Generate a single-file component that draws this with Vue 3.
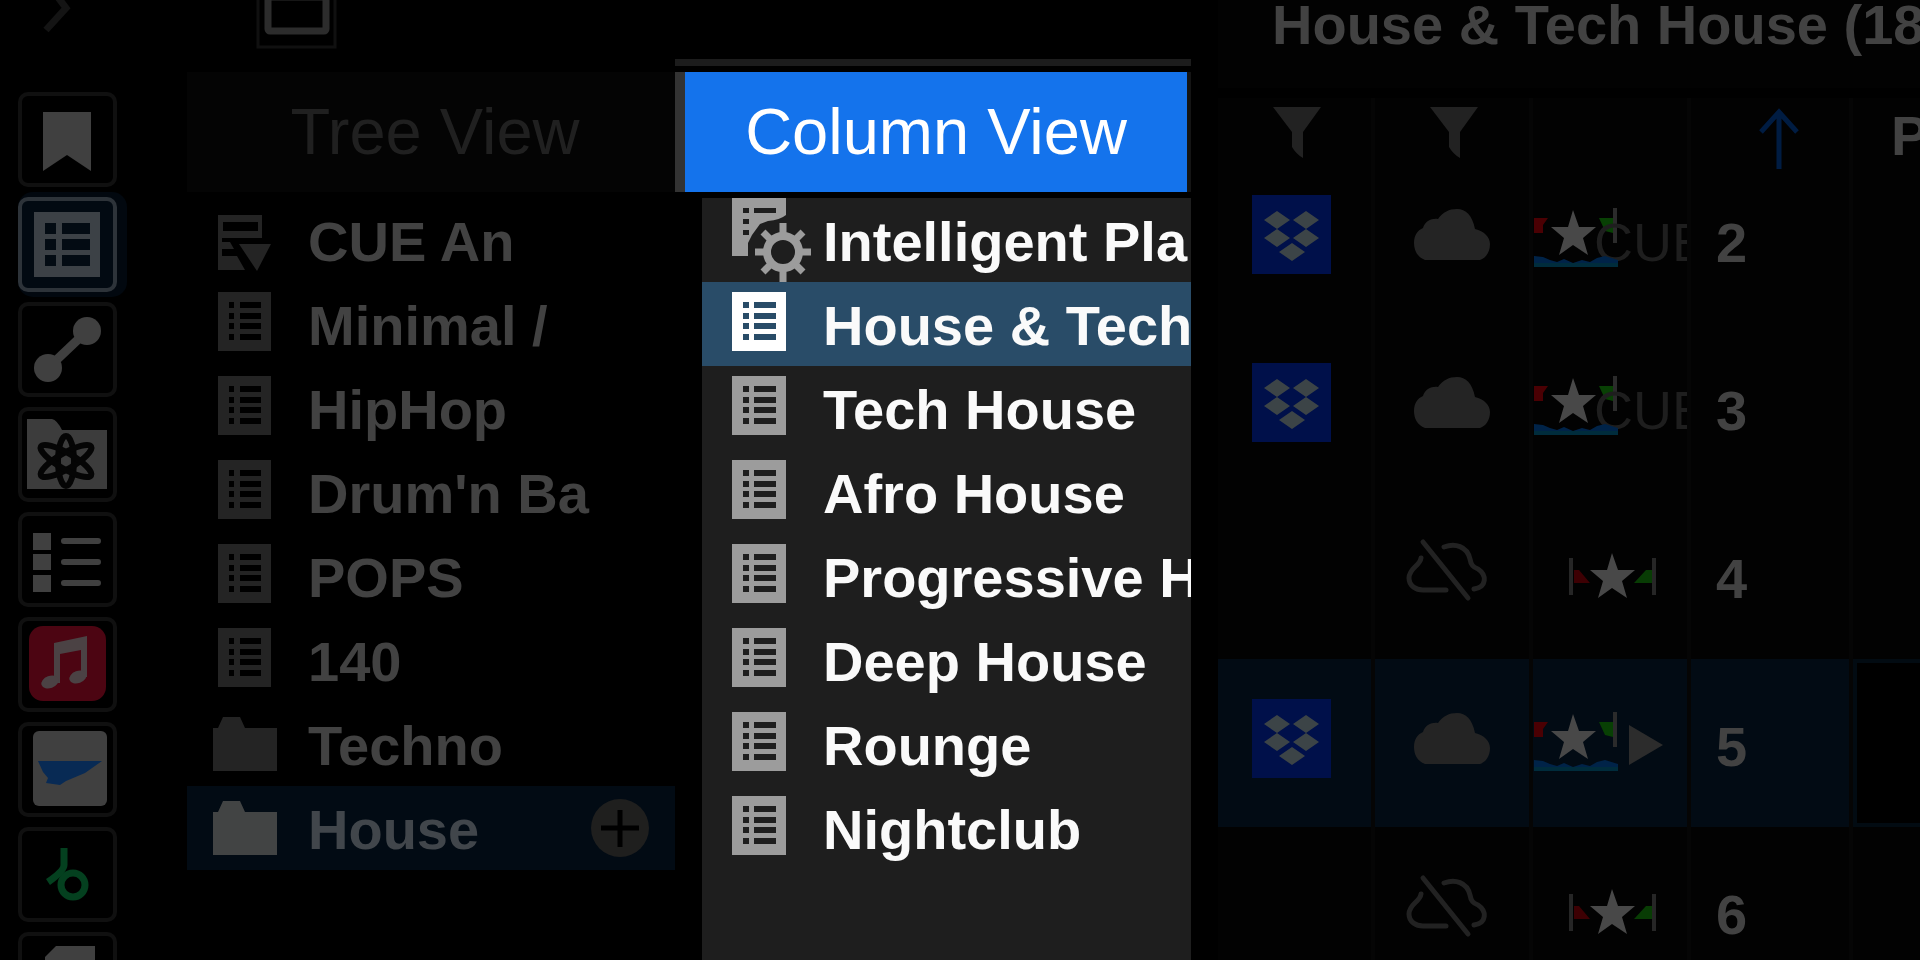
<template>
  <div class="app">
    <header class="topbar">
      <svg class="chevron" viewBox="0 0 40 40" aria-hidden="true">
        <path d="M6 30 L26 8 L14 -8" fill="none" stroke="#141414" stroke-width="7" />
      </svg>
      <button class="layout-button" type="button" aria-label="Layout">
        <svg viewBox="0 0 82 50">
          <path d="M2 -4 V47 H79 V-4" fill="none" stroke="#101010" stroke-width="3" />
          <rect x="12" y="-3" width="58" height="34" rx="2" fill="none" stroke="#2c2c2c" stroke-width="7" />
        </svg>
      </button>
    </header>

    <nav class="sidebar" aria-label="Sources">
      <button
        v-for="item in sources"
        :key="item"
        type="button"
        class="source"
        :class="{ active: item === activeSource }"
        :aria-label="item"
        @click="activeSource = item"
      >
        <svg viewBox="4 4 91 87">
          <path v-if="item === 'Bookmarks'" d="M25 20 H73 V79 L49 63 L25 79 Z" fill="#404040" />
          <g v-else-if="item === 'Playlists'">
            <rect x="16" y="15" width="66" height="65" fill="#3c4146" />
            <path d="M27 26h11v11h-11z M44 26h28v11h-28z M27 42h11v11h-11z M44 42h28v11h-28z M27 58h11v11h-11z M44 58h28v11h-28z" fill="#030b13" />
          </g>
          <g v-else-if="item === 'Matching'" fill="#404040">
            <path d="M30 66 L69 29" stroke="#404040" stroke-width="9" />
            <circle cx="30" cy="66" r="14" />
            <circle cx="69" cy="29" r="14" />
          </g>
          <g v-else-if="item === 'Related Tracks'">
            <path d="M9 12 H34 Q39 13 44 23 H89 V82 H9 Z" fill="#3c3c3c" />
            <g fill="none" stroke="#050505" stroke-width="6">
              <ellipse cx="48" cy="54" rx="8" ry="25" />
              <ellipse cx="48" cy="54" rx="8" ry="29" transform="rotate(60 48 54)" />
              <ellipse cx="48" cy="54" rx="8" ry="29" transform="rotate(-60 48 54)" />
            </g>
            <circle cx="48" cy="54" r="4" fill="#3c3c3c" />
          </g>
          <g v-else-if="item === 'Categories'" fill="#404040">
            <path d="M15 21h18v17h-18z M15 42h18v16h-18z M15 63h18v17h-18z" />
            <path d="M46 29 H80 M46 50 H80 M46 71 H80" stroke="#404040" stroke-width="6" stroke-linecap="round" />
          </g>
          <g v-else-if="item === 'Music'">
            <rect x="11" y="9" width="77" height="75" rx="14" fill="#4c0512" />
            <path d="M36 26 L69 19 V60 H63 V33 L42 37 V66 H36 Z" fill="#4b4244" />
            <ellipse cx="32" cy="65" rx="9" ry="6" fill="#4b4244" transform="rotate(-20 32 65)" />
            <ellipse cx="60" cy="60" rx="9" ry="6" fill="#4b4244" transform="rotate(-20 60 60)" />
          </g>
          <g v-else-if="item === 'Streaming'">
            <rect x="15" y="9" width="74" height="75" rx="6" fill="#404040" />
            <path d="M20 39 H84 L67 51 L48 59 L42 63 L28 61 L30 56 L25 50 Z" fill="#082a54" />
          </g>
          <g v-else-if="item === 'Beats'" fill="none" stroke="#04401f" stroke-width="7">
            <circle cx="55" cy="58" r="12" />
            <path d="M46 21 V38 Q46 44 30 55" />
          </g>
          <path v-else d="M27 25 L38 14 H77 V95 H27 Z" fill="#404040" />
        </svg>
      </button>
    </nav>

    <section class="tree">
      <button class="tab" type="button">Tree View</button>
      <ul class="list">
        <li v-for="row in tree" :key="row.name">
          <button class="row" :class="{ selected: row.name === 'House' }" type="button">
            <svg class="tree-icon" viewBox="0 0 94 84" aria-hidden="true">
              <path v-if="row.icon === 'folder'" d="M0 26 H5 L10 15 H27 L32 26 H64 V69 H0 Z" />
              <path v-else-if="row.icon === 'list'" fill-rule="evenodd" :d="treeList" />
              <path v-else fill-rule="evenodd" d="M5 17H49V40H9V44H17L21 51H9V58H24L32 72H5Z M10 24V33H45V24Z M26 46H58L44 73Z" />
            </svg>
            <span class="name">{{ row.name }}</span>
            <svg v-if="row.name === 'House'" class="add" viewBox="0 0 58 58" aria-hidden="true">
              <circle cx="29" cy="29" r="29" fill="#1f1f1e" />
              <path d="M10 29 H48 M29 11 V48" stroke="#000" stroke-width="5" />
            </svg>
          </button>
        </li>
      </ul>
    </section>

    <div class="rule"></div>
    <section class="column">
      <button class="tab tab-active" type="button">Column View</button>
      <ul class="list column-list">
        <li v-for="row in playlists" :key="row">
          <button class="row" :class="{ selected: row === current }" type="button" @click="current = row">
            <svg class="column-icon" viewBox="0 0 91 84" aria-hidden="true">
              <g v-if="row === 'Intelligent Pla'">
                <path fill-rule="evenodd" d="M0 0H54V17Q48 22 36 23L28 26L20 37L16 45V58H0Z M11 10V15H17V10Z M22 10V15H44V10Z M11 21V26H17V21Z M11 32V37H17V32Z" />
                <circle cx="51" cy="54" r="16" fill="none" stroke="#9c9c9c" stroke-width="8" />
                <path d="M51 25V37M51 71V84M23 54H34M68 54H79M31 34L39 42M63 66L71 74M71 34L63 42M39 66L31 74" stroke="#9c9c9c" stroke-width="7" />
              </g>
              <path v-else fill-rule="evenodd" d="M0 10H54V69H0Z M11 20V26H17V20Z M22 20V26H44V20Z M11 31V37H17V31Z M22 31V37H44V31Z M11 41V47H17V41Z M22 41V47H44V41Z M11 52V58H17V52Z M22 52V58H44V52Z" />
            </svg>
            <span class="name">{{ row }}</span>
          </button>
        </li>
      </ul>
    </section>

    <main class="tracks">
      <h1>House &amp; Tech House (18</h1>
      <table>
        <colgroup>
          <col class="c-source" />
          <col class="c-mid" />
          <col class="c-mid" />
          <col class="c-number" />
          <col />
        </colgroup>
        <thead>
          <tr>
            <th v-for="n in 2" :key="n">
              <svg class="head-icon" viewBox="0 0 154 79" aria-label="Filter">
                <path d="M55 9 H103 L85 34 V60 Q78 56 74 49 V34 Z" fill="#222" />
              </svg>
            </th>
            <th></th>
            <th>
              <svg class="head-icon" viewBox="0 0 154 79" aria-label="Ascending">
                <path d="M88 71 V14 M70 34 L88 14 L106 34" fill="none" stroke="#001c42" stroke-width="5" />
              </svg>
            </th>
            <th class="preview">P</th>
          </tr>
        </thead>
        <tbody>
          <tr v-for="track in tracks" :key="track.no" :class="{ playing: track.no === 5 }">
            <td>
              <svg v-if="track.cloud" class="cell-icon" viewBox="0 0 154 146" aria-label="Dropbox">
                <rect x="34" y="18" width="79" height="79" fill="#00104a" />
                <path d="M59 34l13 9l-13 9l-13-9z M88 34l13 9l-13 9l-13-9z M59 52l13 9l-13 9l-13-9z M88 52l13 9l-13 9l-13-9z M74 66l13 9l-13 9l-13-9z" fill="#3c4447" />
              </svg>
            </td>
            <td>
              <svg class="cell-icon" viewBox="0 0 154 146" aria-hidden="true">
                <path v-if="track.cloud" d="M50 83 C42 80 39 73 39 66 C39 58 43 53 48 51 C50 44 57 41 63 42 C68 35 74 32 82 32 C91 32 97 38 100 52 C109 54 115 60 115 67 C115 75 111 81 105 83 Z" fill="#242424" />
                <g v-else fill="none" stroke="#222" stroke-width="5" stroke-linecap="round">
                  <path d="M48 29 L93 85" />
                  <path d="M46 45 C45 53 34 55 34 65 C34 73 41 77 48 77 H71" />
                  <path d="M69 34 C80 30 92 33 95 46 C96 52 98 54 103 56 C112 62 112 74 99 76" />
                </g>
              </svg>
            </td>
            <td>
              <svg v-if="track.cloud" class="cell-icon" viewBox="0 0 154 146">
                <path d="M1 41H15L10 48V56H1Z" fill="#4a0003" />
                <path d="M66 41H80V56L72 54Z" fill="#084004" />
                <path d="M82 31V66" stroke="#2b2b2b" stroke-width="4" />
                <path v-if="track.no === 5" d="M96 44L130 64L96 84Z" fill="#2c2c2c" />
                <text v-else x="61" y="84" class="cue">CUE</text>
                <path d="M1 79L10 80L17 83L24 85L31 82L40 86L49 83L57 85L64 81L72 79L85 83V90H1Z" fill="#002348" />
                <path d="M1 86H85V90H1Z" fill="#002c3c" />
                <path :d="star" fill="#484848" />
              </svg>
              <svg v-else class="cell-icon" viewBox="0 0 154 146">
                <path d="M38 45V82M121 45V82" stroke="#262626" stroke-width="4" />
                <path d="M41 57H46L57 70H41Z" fill="#3d0003" />
                <path d="M101 70L113 57H119V70Z" fill="#083c04" />
                <path :d="star" fill="#484848" transform="translate(39 7)" />
              </svg>
            </td>
            <td class="number">{{ track.no }}</td>
            <td class="wave"></td>
          </tr>
        </tbody>
      </table>
    </main>
  </div>
</template>

<script setup>
import { ref } from 'vue';

const sources = [
  'Bookmarks',
  'Playlists',
  'Matching',
  'Related Tracks',
  'Categories',
  'Music',
  'Streaming',
  'Beats',
  'Devices',
];
const activeSource = ref('Playlists');

const tree = [
  { name: 'CUE An', icon: 'cue' },
  { name: 'Minimal /', icon: 'list' },
  { name: 'HipHop', icon: 'list' },
  { name: "Drum'n Ba", icon: 'list' },
  { name: 'POPS', icon: 'list' },
  { name: '140', icon: 'list' },
  { name: 'Techno', icon: 'folder' },
  { name: 'House', icon: 'folder' },
];

const playlists = [
  'Intelligent Pla',
  'House & Tech House',
  'Tech House',
  'Afro House',
  'Progressive House',
  'Deep House',
  'Rounge',
  'Nightclub',
];
const current = ref('House & Tech House');

const tracks = [
  { no: 2, cloud: true },
  { no: 3, cloud: true },
  { no: 4, cloud: false },
  { no: 5, cloud: true },
  { no: 6, cloud: false },
];

const treeList =
  'M5 10H58V69H5Z M16 20V26H21V20Z M27 20V26H48V20Z M16 31V37H21V31Z M27 31V37H48V31Z M16 41V47H21V41Z M27 41V47H48V41Z M16 52V58H21V52Z M27 52V58H48V52Z';
const star = 'M40 33L46 50L63 50L50 61L55 78L40 68L26 78L31 61L18 50L35 50Z';
</script>

<style>
body {
  margin: 0;
  background: #000;
}
</style>

<style scoped>
.app {
  display: grid;
  grid-template-columns: 187px 488fr 516fr 729fr;
  grid-template-rows: 72px 1fr;
  height: 100vh;
  overflow: hidden;
  background: #000;
  color: #424242;
  font-family: "Liberation Sans", Arial, sans-serif;
}

svg {
  display: block;
  flex: none;
}

button {
  padding: 0;
  border: none;
  background: none;
  color: inherit;
  font: inherit;
  cursor: pointer;
}

.topbar {
  grid-column: 1 / 3;
  display: flex;
  align-items: flex-start;
  gap: 176px;
  padding-left: 40px;
}

.chevron {
  width: 40px;
  height: 40px;
}

.layout-button svg {
  width: 82px;
  height: 50px;
}

.sidebar {
  grid-area: 2 / 1;
  display: flex;
  flex-direction: column;
  gap: 10px;
  padding: 20px 0 0 18px;
  min-height: 0;
}

.source {
  box-sizing: border-box;
  flex: none;
  width: 99px;
  height: 95px;
  border: 4px solid #101010;
  border-radius: 10px;
}

.source.active {
  border-color: #2d3339;
  background: #020a12;
  box-shadow: 5px 0 0 5px #02080f;
}

.tree {
  grid-area: 2 / 2;
  min-width: 0;
}

.tab {
  display: block;
  width: 100%;
  height: 120px;
  margin-bottom: 6px;
  background: #040404;
  color: #202020;
  font-size: 65px;
  line-height: 76px;
  text-align: center;
}

.tree .tab {
  padding-left: 8px;
}

.list {
  margin: 0;
  padding: 0;
  list-style: none;
}

.row {
  display: flex;
  align-items: center;
  width: 100%;
  height: 84px;
  overflow: hidden;
  font-size: 56px;
  font-weight: bold;
  line-height: 84px;
  text-align: left;
  white-space: nowrap;
}

.tree .row {
  padding-left: 25px;
}

.tree .selected {
  background: #020b14;
  color: #41464b;
}

.tree-icon {
  width: 96px;
  height: 84px;
  fill: #242424;
}

.selected .tree-icon {
  fill: #424444;
}

.name {
  flex: 1;
  min-width: 0;
  padding-top: 3px;
}

.add {
  width: 58px;
  height: 58px;
  margin-right: 26px;
}

.rule {
  grid-area: 1 / 3;
  height: 7px;
  margin-top: 59px;
  background: #1c1c1c;
}

.column {
  grid-area: 2 / 3;
  display: flex;
  flex-direction: column;
  min-width: 0;
}

.tab-active {
  flex: none;
  border-right: 4px solid #141414;
  border-left: 10px solid #333;
  background: #1473ec;
  color: #fff;
}

.column-list {
  flex: 1;
  margin-left: 27px;
  background: #1e1e1e;
  color: #fafafa;
}

.column-list .row {
  padding-left: 30px;
}

.column-list .selected {
  background: #294c68;
}

.column-icon {
  width: 91px;
  height: 84px;
  fill: #9c9c9c;
}

.selected .column-icon {
  fill: #fff;
}

.tracks {
  grid-area: 1 / 4 / 3 / 5;
  min-width: 0;
  margin-left: 27px;
  overflow: hidden;
  background: #020202;
}

h1 {
  height: 88px;
  margin: 0;
  padding-left: 54px;
  border-bottom: 10px solid #000;
  font-size: 56px;
  line-height: 50px;
  white-space: nowrap;
}

table {
  width: 100%;
  border-collapse: separate;
  border-spacing: 0;
  table-layout: fixed;
}

.c-source {
  width: 157px;
}

.c-mid {
  width: 158px;
}

.c-number {
  width: 162px;
}

th,
td {
  box-sizing: border-box;
  overflow: hidden;
  padding: 0;
  border-right: 4px solid #050505;
  vertical-align: bottom;
}

th:last-child,
td:last-child {
  border-right: none;
}

th {
  height: 79px;
  vertical-align: top;
}

td {
  height: 168px;
}

tbody tr:first-child td {
  height: 146px;
}

.head-icon {
  width: 154px;
  height: 79px;
}

.cell-icon {
  width: 154px;
  height: 146px;
}

.cue {
  fill: #1e1e1e;
  font-size: 54px;
}

.preview {
  padding-left: 38px;
  font-size: 56px;
  line-height: 76px;
  text-align: left;
}

.number {
  padding: 0 0 38px 25px;
  font-size: 56px;
  font-weight: bold;
  line-height: 84px;
}

.playing td {
  background: #020b14;
}

.playing .wave {
  background: #000;
  box-shadow: inset 4px 4px #020b12, inset 0 -4px #020b12;
}
</style>
